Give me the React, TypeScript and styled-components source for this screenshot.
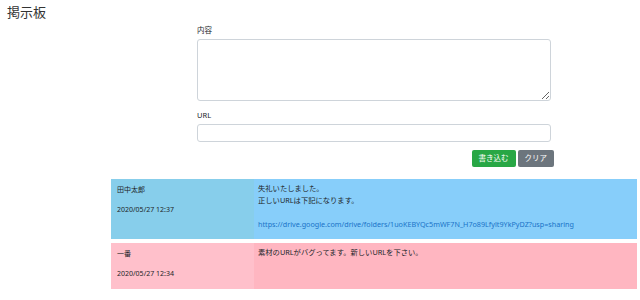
import styled, { createGlobalStyle } from "styled-components"

const GlobalStyle = createGlobalStyle`
    body {
        margin: 0;
        background: #fff;
        color: #212529;
        font-family: "Noto Sans", "Noto Sans CJK JP", sans-serif;
    }
`

const Page = styled.div`
    width: 640px;
    height: 300px;
    overflow: hidden;
`

const Title = styled.h1`
    margin: 0;
    padding: 2px 0 0 7px;
    height: 22px;
    font-size: 13px;
    font-weight: 400;
    line-height: 20px;
    color: #333;
`

const Form = styled.form`
    width: 354px;
    margin-left: 197px;
    display: flex;
    flex-direction: column;
`

const Label = styled.label<{ $top?: number }>`
    display: block;
    margin-top: ${p => p.$top ?? 0}px;
    font-size: 7.5px;
    line-height: 12px;
    color: #212529;
`

const TextArea = styled.textarea`
    box-sizing: border-box;
    margin-top: 3px;
    width: 100%;
    height: 62px;
    border: 1px solid #ced4da;
    border-radius: 3px;
    resize: vertical;
    font-family: inherit;
`

const Input = styled.input`
    box-sizing: border-box;
    margin-top: 3px;
    width: 100%;
    height: 18px;
    border: 1px solid #ced4da;
    border-radius: 3px;
`

const ButtonRow = styled.div`
    display: flex;
    justify-content: flex-end;
    gap: 2px;
    margin-top: 8px;
    margin-right: -3px;
`

const Button = styled.button<{ $bg: string }>`
    height: 17px;
    padding: 0 7px;
    border: none;
    border-radius: 2px;
    background: ${p => p.$bg};
    color: #fff;
    font-family: inherit;
    font-size: 7.5px;
    line-height: 17px;
`

const Posts = styled.div`
    width: 526px;
    margin: 12px 0 0 111px;
    display: flex;
    flex-direction: column;
    gap: 4px;
`

const Post = styled.div<{ $height: number }>`
    display: flex;
    height: ${p => p.$height}px;
    font-size: 7px;
    line-height: 12px;
`

const Meta = styled.div<{ $bg: string }>`
    width: 143px;
    box-sizing: border-box;
    padding: 5px 6px;
    background: ${p => p.$bg};

    p {
        margin: 0 0 8px;
    }
`

const Body = styled.div<{ $bg: string }>`
    flex: 1;
    box-sizing: border-box;
    padding: 3px 4px;
    background: ${p => p.$bg};
    font-size: 7.3px;

    p {
        margin: 0;
    }

    a {
        display: block;
        margin-top: 12px;
        font-size: 7.2px;
        color: #1a73c8;
        text-decoration: none;
    }
`

export default function App() {
    return (
        <Page>
            <GlobalStyle />
            <Title>掲示板</Title>
            <Form>
                <Label>内容</Label>
                <TextArea />
                <Label $top={8}>URL</Label>
                <Input type="text" />
                <ButtonRow>
                    <Button type="button" $bg="#28a745">書き込む</Button>
                    <Button type="button" $bg="#6c757d">クリア</Button>
                </ButtonRow>
            </Form>
            <Posts>
                <Post $height={60}>
                    <Meta $bg="#87ceeb">
                        <p>田中太郎</p>
                        <p>2020/05/27 12:37</p>
                    </Meta>
                    <Body $bg="#87cefa">
                        <p>失礼いたしました。</p>
                        <p>正しいURLは下記になります。</p>
                        <a href="#">https://drive.google.com/drive/folders/1uoKEBYQc5mWF7N_H7o89Lfylt9YkPyDZ?usp=sharing</a>
                    </Body>
                </Post>
                <Post $height={46}>
                    <Meta $bg="#ffc0cb">
                        <p>一番</p>
                        <p>2020/05/27 12:34</p>
                    </Meta>
                    <Body $bg="#ffb6c1">
                        <p>素材のURLがバグってます。新しいURLを下さい。</p>
                    </Body>
                </Post>
            </Posts>
        </Page>
    )
}
